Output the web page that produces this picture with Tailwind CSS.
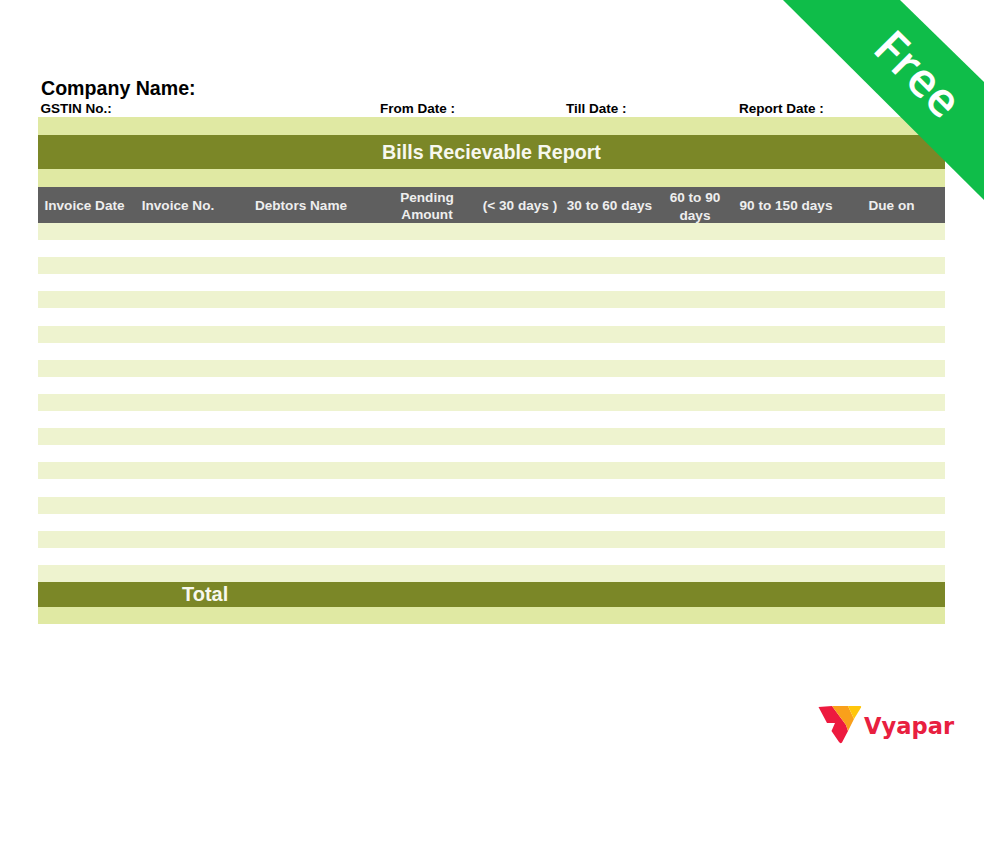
<!DOCTYPE html>
<html lang="en">
<head>
    <meta charset="UTF-8">
    <title>Bills Recievable Report</title>
    <script src="https://cdn.jsdelivr.net/npm/@tailwindcss/browser@4"></script>
</head>
<body class="bg-white w-[984px] h-[860px] relative overflow-hidden font-['Liberation_Sans',Arial,sans-serif]">
    <!-- Report sheet -->
    <div class="pl-[38px] pr-[39px] pt-[77px]">
        <div class="pl-[3px] text-[19.6px] leading-[22px] font-bold text-black">Company Name:</div>
        <div class="grid grid-cols-[339.5px_186px_173px_1fr] h-[18px] items-center pl-[2.5px] text-[13.5px] font-bold text-black">
            <span>GSTIN No.:</span>
            <span>From Date :</span>
            <span>Till Date :</span>
            <span>Report Date :</span>
        </div>

        <div class="h-[17.5px] bg-[#e0e9a3]"></div>
        <div class="h-[34.5px] pt-[2px] bg-[#7b8727] flex items-center justify-center text-[19.7px] font-bold text-[#f7f8ee]">Bills Recievable Report</div>
        <div class="h-[18px] bg-[#e0e9a3]"></div>

        <!-- Column headers -->
        <div class="h-[36px] bg-[#5f5f5f] grid grid-rows-[36px] grid-cols-[93px_94px_152px_100px_86px_93px_78px_104px_107px] items-center text-center text-[13.6px] leading-[17px] font-bold text-[#eeeeee]">
            <span>Invoice Date</span>
            <span>Invoice No.</span>
            <span>Debtors Name</span>
            <span class="pt-[1px]">Pending<br>Amount</span>
            <span>(&lt; 30 days )</span>
            <span>30 to 60 days</span>
            <span class="pt-[3px] leading-[18px]">60 to 90<br>days</span>
            <span>90 to 150 days</span>
            <span>Due on</span>
        </div>

        <!-- Empty rows -->
        <div class="h-[17.1px] bg-[#eef3cf]"></div>
        <div class="h-[17.1px] bg-white"></div>
        <div class="h-[17.1px] bg-[#eef3cf]"></div>
        <div class="h-[17.1px] bg-white"></div>
        <div class="h-[17.1px] bg-[#eef3cf]"></div>
        <div class="h-[17.1px] bg-white"></div>
        <div class="h-[17.1px] bg-[#eef3cf]"></div>
        <div class="h-[17.1px] bg-white"></div>
        <div class="h-[17.1px] bg-[#eef3cf]"></div>
        <div class="h-[17.1px] bg-white"></div>
        <div class="h-[17.1px] bg-[#eef3cf]"></div>
        <div class="h-[17.1px] bg-white"></div>
        <div class="h-[17.1px] bg-[#eef3cf]"></div>
        <div class="h-[17.1px] bg-white"></div>
        <div class="h-[17.1px] bg-[#eef3cf]"></div>
        <div class="h-[17.1px] bg-white"></div>
        <div class="h-[17.1px] bg-[#eef3cf]"></div>
        <div class="h-[17.1px] bg-white"></div>
        <div class="h-[17.1px] bg-[#eef3cf]"></div>
        <div class="h-[17.1px] bg-white"></div>
        <div class="h-[17.1px] bg-[#eef3cf]"></div>

        <div class="h-[25px] bg-[#7b8727] pl-[144px] flex items-center text-[20px] font-bold text-[#f7f8ee]">Total</div>
        <div class="h-[17.5px] bg-[#e0e9a3]"></div>
    </div>

    <!-- Free ribbon -->
    <svg class="absolute top-0 right-0" width="201" height="200" viewBox="783 0 201 200">
        <polygon points="783,0 900,0 984,82 984,200" fill="#0fbd49"/>
    </svg>
    <div class="absolute left-[859px] top-[43px] w-[120px] text-center rotate-45 font-['Open_Sans',sans-serif] text-[47px] leading-[60px] font-semibold text-white">Free</div>

    <!-- Logo -->
    <div class="absolute left-[818px] top-[706px] flex items-start">
        <svg width="44" height="38" viewBox="0 0 44 38">
            <path d="M0.5 1L14 0L28 19L30 25L24 36.5Q22.5 38 21 36L13.5 25L17 17H9Z" fill="#ed1a3f"/>
            <path d="M14 0H30L36 13L30 25L28 19Z" fill="#f9a01b"/>
            <path d="M30 0H42.5Q43.5 0 43 1.5L36 13Z" fill="#ffc60b"/>
        </svg>
        <span class="ml-[2px] mt-[6px] font-['DejaVu_Sans',sans-serif] text-[22.6px] leading-[28px] font-bold text-[#e8203f]">Vyapar</span>
    </div>
</body>
</html>
